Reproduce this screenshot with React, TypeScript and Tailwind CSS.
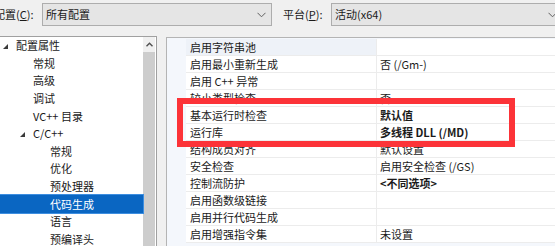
const font = { fontFamily: '"Noto Sans CJK SC", "Noto Sans", sans-serif' };

type Row = { name: string; value?: string; bold?: boolean };

const rows: Row[] = [
  { name: "启用字符串池" },
  { name: "启用最小重新生成", value: "否 (/Gm-)" },
  { name: "启用 C++ 异常" },
  { name: "较小类型检查", value: "否" },
  { name: "基本运行时检查", value: "默认值", bold: true },
  { name: "运行库", value: "多线程 DLL (/MD)", bold: true },
  { name: "结构成员对齐", value: "默认设置" },
  { name: "安全检查", value: "启用安全检查 (/GS)" },
  { name: "控制流防护", value: "<不同选项>", bold: true },
  { name: "启用函数级链接" },
  { name: "启用并行代码生成" },
  { name: "启用增强指令集", value: "未设置" },
];

type TreeItem = { label: string; indent: number; expanded?: boolean; selected?: boolean };

const tree: TreeItem[] = [
  { label: "配置属性", indent: 16, expanded: true },
  { label: "常规", indent: 33 },
  { label: "高级", indent: 33 },
  { label: "调试", indent: 33 },
  { label: "VC++ 目录", indent: 33 },
  { label: "C/C++", indent: 33, expanded: true },
  { label: "常规", indent: 50 },
  { label: "优化", indent: 50 },
  { label: "预处理器", indent: 50 },
  { label: "代码生成", indent: 50, selected: true },
  { label: "语言", indent: 50 },
  { label: "预编译头", indent: 50 },
];

function Chevron() {
  return (
    <svg width="9" height="6" viewBox="0 0 9 6" className="shrink-0">
      <polyline points="0.5,0.8 4.5,4.8 8.5,0.8" fill="none" stroke="#606060" strokeWidth="1" />
    </svg>
  );
}

function Combo({ text, width }: { text: string; width: number }) {
  return (
    <div
      className="flex h-[23px] shrink-0 items-center justify-between border border-[#adadad] bg-[#e5e5e5] pl-[3px] pr-[5px] text-[11px] text-[#1a1a1a]"
      style={{ width }}
    >
      <span>{text}</span>
      <Chevron />
    </div>
  );
}

export default function App() {
  return (
    <div className="relative h-[246px] w-[555px] overflow-hidden bg-[#f0f0f0] text-[#1a1a1a]" style={font}>
      {/* top bar */}
      <div className="flex h-[36px] items-start pt-[3px] text-[11px]">
        <div className="ml-[-6px] flex h-[23px] w-[48px] shrink-0 items-center">
          配置(<u>C</u>):
        </div>
        <Combo text="所有配置" width={230} />
        <div className="ml-[11px] flex h-[23px] w-[48px] shrink-0 items-center">
          平台(<u>P</u>):
        </div>
        <Combo text="活动(x64)" width={232} />
      </div>

      <div className="flex">
        {/* tree */}
        <div className="flex h-[210px] shrink-0 border-t border-r border-[#a0a0a0] bg-white">
          <div className="w-[143px] text-[11px]">
            {tree.map((t, i) => (
              <div
                key={i}
                className={`relative flex h-[17.6px] items-center ${
                  t.selected ? "bg-[#0a66c2] text-white outline outline-1 outline-[#3d8ee0]" : ""
                }`}
                style={{ paddingLeft: t.indent }}
              >
                {t.expanded && (
                  <svg
                    width="5"
                    height="5"
                    viewBox="0 0 5 5"
                    className="absolute top-[7px]"
                    style={{ left: t.indent - 13 }}
                  >
                    <polygon points="5,0 5,5 0,5" fill="#3a3a3a" />
                  </svg>
                )}
                <span className="whitespace-nowrap leading-none">{t.label}</span>
              </div>
            ))}
          </div>
          <div className="flex w-[13px] flex-col border-r border-white bg-[#f0f0f0]">
            <div className="flex h-[15px] items-center justify-center">
              <svg width="7" height="5" viewBox="0 0 7 5">
                <polyline points="0.5,4.2 3.5,1.2 6.5,4.2" fill="none" stroke="#505050" strokeWidth="1.4" />
              </svg>
            </div>
            <div className="flex-1 bg-[#cdcdcd]" />
          </div>
        </div>

        {/* property grid */}
        <div className="ml-[9px] mt-px flex-1 border-t border-l border-[#b4b4b4] bg-[#f4f7fc] pt-px text-[11px]">
          {rows.map((r, i) => (
            <div key={i} className="ml-[19px] flex h-[17px] border-b border-[#ececec]">
              <div
                className={`flex w-[191px] shrink-0 items-center border-r border-[#ececec] pl-[4px] ${
                  i === 0 ? "bg-[#eef2f8]" : "bg-white"
                }`}
              >
                <span className="whitespace-nowrap leading-none">{r.name}</span>
              </div>
              <div className="flex flex-1 items-center bg-white pl-[3px]">
                <span className={`whitespace-nowrap leading-none ${r.bold ? "font-bold" : ""}`}>{r.value}</span>
              </div>
            </div>
          ))}
        </div>
      </div>

      {/* red annotation box */}
      <div className="pointer-events-none absolute left-[177px] top-[98px] h-[49px] w-[338px] border-[6px] border-[#fc3338]" />
    </div>
  );
}
